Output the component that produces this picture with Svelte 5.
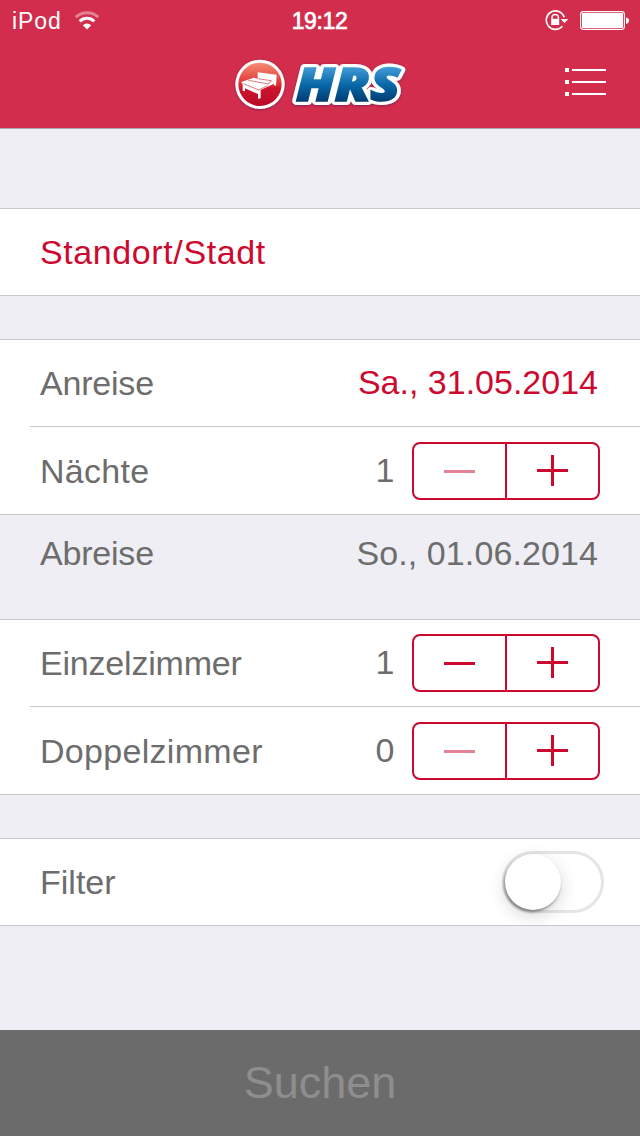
<script lang="ts">
	type Counter = 'nights' | 'singles' | 'doubles';

	const minimum: Record<Counter, number> = { nights: 1, singles: 0, doubles: 0 };
	const weekdays = ['So.', 'Mo.', 'Di.', 'Mi.', 'Do.', 'Fr.', 'Sa.'];
	const arrival = new Date(2014, 4, 31);

	let counts = $state<Record<Counter, number>>({ nights: 1, singles: 1, doubles: 0 });
	let filter = $state(false);

	let departure = $derived(new Date(2014, 4, 31 + counts.nights));

	function pad(n: number) {
		return String(n).padStart(2, '0');
	}

	function format(date: Date) {
		return `${weekdays[date.getDay()]}, ${pad(date.getDate())}.${pad(date.getMonth() + 1)}.${date.getFullYear()}`;
	}
</script>

{#snippet stepper(key: Counter, label: string)}
	<div class="row">
		<span class="label {key}">{label}</span>
		<span class="count">{counts[key]}</span>
		<div class="stepper">
			<button
				type="button"
				aria-label="{label} verringern"
				disabled={counts[key] <= minimum[key]}
				onclick={() => counts[key]--}
			>
				<svg width="31" height="31" viewBox="0 0 31 31"><path d="M0 15h31v3H0z" /></svg>
			</button>
			<button type="button" aria-label="{label} erhöhen" onclick={() => counts[key]++}>
				<svg width="31" height="31" viewBox="0 0 31 31"><path d="M0 14h31v3H0zM14 0h3v31h-3z" /></svg>
			</button>
		</div>
	</div>
{/snippet}

<div class="screen">
	<header>
		<div class="status">
			<div class="carrier">
				<span>iPod</span>
				<svg width="26" height="20" viewBox="0 0 26 20" fill="none" stroke="#fff">
					<path d="M1.8 6.2a16 16 0 0 1 22.4 0" stroke-width="3" opacity=".4" />
					<path d="M5.7 10.3a10.5 10.5 0 0 1 14.6 0" stroke-width="3" />
					<path d="M8.8 14.2a6.2 6.2 0 0 1 8.4 0L13 18.6z" fill="#fff" stroke="none" />
				</svg>
			</div>
			<span class="time">19:12</span>
			<div class="indicators">
				<svg width="25" height="22" viewBox="0 0 25 22">
					<path d="M19.2 7.2A9.2 9.2 0 1 0 17.4 16.2" fill="none" stroke="#fff" stroke-width="1.6" />
					<path d="M15.8 9h7.4l-3.7 4.2z" fill="#fff" />
					<path d="M7 9V7.6a3.2 3.2 0 0 1 6.4 0V9" fill="none" stroke="#fff" stroke-width="1.5" />
					<path d="M6.2 8.8h8V15h-8z" fill="#fff" />
				</svg>
				<svg width="49" height="20" viewBox="0 0 49 20" fill="#fff">
					<rect x=".6" y=".6" width="43.8" height="17.8" rx="2.8" fill="none" stroke="#fff" stroke-width="1.1" />
					<rect x="2" y="2" width="41" height="15" rx="1" />
					<path d="M46 6.5q3 .5 3 3t-3 3.5z" />
				</svg>
			</div>
		</div>

		<nav>
			<svg class="logo" viewBox="0 0 570 204" role="img" aria-label="HRS">
				<defs>
					<linearGradient id="ball" x1="0" y1="0" x2="0" y2="1">
						<stop offset="0" stop-color="#f58d72" />
						<stop offset=".48" stop-color="#e03536" />
						<stop offset=".6" stop-color="#cc142b" />
						<stop offset="1" stop-color="#b90d29" />
					</linearGradient>
					<linearGradient id="letters" gradientUnits="userSpaceOnUse" x1="0" y1="52" x2="0" y2="156">
						<stop offset="0" stop-color="#429bd6" />
						<stop offset=".5" stop-color="#0968a8" />
						<stop offset="1" stop-color="#003b70" />
					</linearGradient>
					<filter id="shade" x="-10%" y="-10%" width="120%" height="130%">
						<feDropShadow dx="0" dy="2" stdDeviation="3" flood-color="#4b1c5c" flood-opacity=".7" />
					</filter>
				</defs>
				<circle cx="105" cy="103" r="74" fill="#fff" filter="url(#shade)" />
				<circle cx="105" cy="103" r="65" fill="url(#ball)" />
				<path
					d="M98 67L155 74L153 107L147 106V101L107 120V145L99 146V132L60 115V124L53 122V103L49 96L86 83L98 86z"
					fill="#fff"
				/>
				<path
					d="M98 86L139 92L131 102L70 91M56 101L101 120L128 107"
					fill="none"
					stroke="#d5333c"
					stroke-width="2"
				/>
				<text class="wordmark outline" x="213" y="153" textLength="312" lengthAdjust="spacingAndGlyphs">HRS</text>
				<text class="wordmark" x="213" y="153" textLength="312" lengthAdjust="spacingAndGlyphs">HRS</text>
			</svg>
			<button type="button" class="menu" aria-label="Menü">
				<svg width="41" height="28" viewBox="0 0 41 28" fill="#fff">
					{#each [0, 12, 24] as y}
						<rect x="0" {y} width="4" height="4" />
						<rect x="7" y={y + 1} width="34" height="2" />
					{/each}
				</svg>
			</button>
		</nav>
	</header>

	<main>
		<section class="group location">
			<div class="row"><span class="label accent city">Standort/Stadt</span></div>
		</section>

		<section class="group stay">
			<div class="row">
				<span class="label travel">Anreise</span>
				<span class="date accent">{format(arrival)}</span>
			</div>
			<hr />
			{@render stepper('nights', 'Nächte')}
		</section>

		<div class="departure">
			<span class="label travel">Abreise</span>
			<span class="date">{format(departure)}</span>
		</div>

		<section class="group rooms">
			{@render stepper('singles', 'Einzelzimmer')}
			<hr />
			{@render stepper('doubles', 'Doppelzimmer')}
		</section>

		<section class="group">
			<div class="row filter">
				<span class="label">Filter</span>
				<button
					type="button"
					role="switch"
					aria-checked={filter}
					aria-label="Filter"
					class="switch"
					class:on={filter}
					onclick={() => (filter = !filter)}
				>
					<span class="knob"></span>
				</button>
			</div>
		</section>
	</main>

	<button type="button" class="search" disabled>Suchen</button>
</div>

<style>
	:global(body) {
		margin: 0;
	}

	.screen {
		display: flex;
		flex-direction: column;
		box-sizing: border-box;
		width: 640px;
		height: 1136px;
		background: #efeef4;
		color: #6d6d6d;
		font-family: 'Liberation Sans', Helvetica, Arial, sans-serif;
		font-size: 34px;
	}

	button {
		padding: 0;
		border: 0;
		background: none;
		font: inherit;
		color: inherit;
	}

	svg {
		display: block;
	}

	header {
		height: 128px;
		border-bottom: 1px solid #a9a5a8;
		background: #d22d4c;
		color: #fff;
	}

	.status {
		display: grid;
		grid-template-columns: 1fr auto 1fr;
		align-items: center;
		box-sizing: border-box;
		height: 40px;
		padding: 2px 11px 0 12px;
		font-size: 23px;
	}

	.carrier,
	.indicators {
		display: flex;
		align-items: center;
	}

	.carrier {
		gap: 12px;
		letter-spacing: 0.9px;
	}

	.time {
		margin-right: 2px;
		letter-spacing: -0.4px;
		-webkit-text-stroke: 0.7px #fff;
	}

	.indicators {
		justify-content: flex-end;
		gap: 10px;
	}

	nav {
		display: grid;
		grid-template-columns: 1fr 190px 1fr;
		align-items: center;
		height: 88px;
	}

	.logo {
		grid-column: 2;
		width: 190px;
		height: 68px;
	}

	.wordmark {
		font-family: 'Open Sans', sans-serif;
		font-size: 139px;
		font-style: italic;
		font-weight: 800;
		fill: url(#letters);
		stroke: url(#letters);
		stroke-width: 5px;
	}

	.wordmark.outline {
		fill: #fff;
		stroke: #fff;
		stroke-width: 24px;
		stroke-linejoin: round;
		filter: url(#shade);
	}

	.menu {
		justify-self: end;
		margin: 0 34px 4px 0;
	}

	main {
		flex: 1;
		padding-top: 79px;
	}

	.group {
		overflow: hidden;
		border-top: 1px solid #c8c7cc;
		border-bottom: 1px solid #c8c7cc;
		background: #fff;
	}

	.location,
	.rooms {
		margin-bottom: 43px;
	}

	.row {
		display: flex;
		align-items: center;
		height: 86px;
		padding: 0 40px;
	}

	hr + .row {
		padding-top: 1px;
	}

	hr {
		height: 1px;
		margin: 0 0 0 30px;
		border: 0;
		background: #c8c7cc;
	}

	.label {
		flex: 1;
	}

	.city {
		letter-spacing: 0.6px;
	}

	.travel {
		letter-spacing: -0.2px;
	}

	.nights,
	.doubles {
		letter-spacing: 0.3px;
	}

	.singles {
		letter-spacing: -0.2px;
	}

	.accent {
		color: #cc092f;
	}

	.count {
		width: 20px;
		margin-right: 17px;
		padding-bottom: 2px;
		text-align: center;
	}

	.departure {
		display: flex;
		box-sizing: border-box;
		height: 104px;
		padding: 19px 42px 0 40px;
	}

	.departure .date {
		letter-spacing: 0.1px;
	}

	.stay .date {
		margin-right: 2px;
		padding-bottom: 2px;
	}

	.stepper {
		display: grid;
		grid-template-columns: 91px 91px;
		gap: 2px;
		box-sizing: border-box;
		width: 188px;
		height: 58px;
		border: 2px solid #cc092f;
		border-radius: 8px;
		background: linear-gradient(#cc092f, #cc092f) center / 2px 100% no-repeat;
	}

	.stepper button {
		display: flex;
		align-items: flex-start;
		justify-content: center;
		padding-top: 11px;
		fill: #cc092f;
	}

	.stepper button:disabled svg {
		opacity: 0.5;
	}

	.row.filter {
		padding-right: 36px;
	}

	.switch {
		display: flex;
		box-sizing: border-box;
		width: 102px;
		height: 62px;
		border: 3px solid #e5e5e5;
		border-radius: 31px;
	}

	.switch.on {
		justify-content: flex-end;
		border-color: #cc092f;
		background: #cc092f;
	}

	.knob {
		width: 56px;
		height: 56px;
		border-radius: 50%;
		background: #fff;
		box-shadow:
			-1px 2px 3px rgb(0 0 0 / 0.4),
			0 6px 18px rgb(0 0 0 / 0.16);
	}

	.search {
		height: 106px;
		background: #6b6b6b;
		color: #8e8e8e;
		font-size: 45px;
	}
</style>
